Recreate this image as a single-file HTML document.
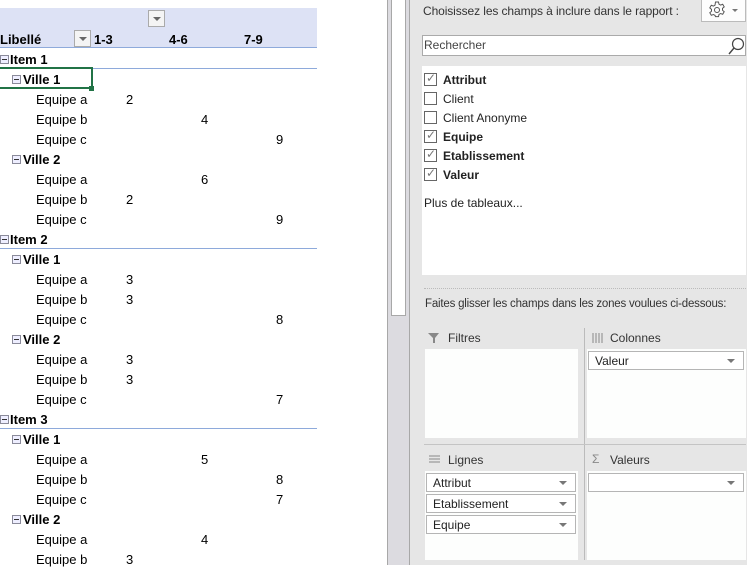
<!DOCTYPE html>
<html><head><meta charset="utf-8"><style>
*{margin:0;padding:0;box-sizing:border-box}
body{width:747px;height:565px;overflow:hidden;background:#fff;font-family:"Liberation Sans",sans-serif;font-size:13px;color:#000;position:relative}
.a{position:absolute;white-space:nowrap}
.r{position:absolute;left:0;width:320px;height:20px;line-height:22px}
.b{font-weight:bold}
.m{position:absolute;width:9px;height:9px;border:1px solid #8a8a9a;background:#eef;top:6px}
.m:after{content:"";position:absolute;left:1px;top:3px;width:5px;height:1px;background:#333}
.hl{position:absolute;left:0;width:317px;height:1px;background:#8eaadb}
.cb{position:absolute;left:424px;width:13px;height:13px;border:1px solid #666;background:#fff}
.ck:after{content:"✓";position:absolute;left:1px;top:-3px;font-size:12px;color:#777}
.fl{position:absolute;left:443px;font-size:12px;color:#222}
.dd{position:absolute;height:19px;border:1px solid #b5b5b5;background:#fff;font-size:12px;line-height:18px;padding-left:6px;color:#222}
.dd:after{content:"";position:absolute;right:8px;top:7px;border-left:4px solid transparent;border-right:4px solid transparent;border-top:4px solid #777}
.zone{position:absolute;background:#fdfefd}
.zt{position:absolute;font-size:12px;color:#333}
</style></head><body>
<div class="a" style="left:0;top:8px;width:317px;height:39px;background:#dde2f5"></div>
<div class="a" style="left:0;top:47px;width:317px;height:1px;background:#8eaadb"></div>
<div class="a" style="left:148px;top:10px;width:17px;height:17px;border:1px solid #aaa;background:#f4f4f4"></div>
<div class="a" style="left:153px;top:17px;border-left:4px solid transparent;border-right:4px solid transparent;border-top:4px solid #666"></div>
<div class="a" style="left:74px;top:30px;width:17px;height:17px;border:1px solid #aaa;background:#f4f4f4"></div>
<div class="a" style="left:79px;top:37px;border-left:4px solid transparent;border-right:4px solid transparent;border-top:4px solid #666"></div>
<div class="a b" style="left:0;top:32px;line-height:16px">Libellé</div>
<div class="a b" style="left:94px;top:32px;line-height:16px">1-3</div>
<div class="a b" style="left:169px;top:32px;line-height:16px">4-6</div>
<div class="a b" style="left:244px;top:32px;line-height:16px">7-9</div>
<div class="hl" style="top:68px"></div><div class="hl" style="top:248px"></div><div class="hl" style="top:428px"></div>
<div class="a" style="left:0;top:67px;width:93px;height:22px;border:2px solid #217346;border-left:none"></div>
<div class="a" style="left:89px;top:86px;width:5px;height:5px;background:#217346"></div>

<div class="r b" style="top:49px"><span class="m" style="left:0"></span><span class="a" style="left:10px">Item 1</span></div>
<div class="r b" style="top:69px"><span class="m" style="left:12px"></span><span class="a" style="left:23px">Ville 1</span></div>
<div class="r" style="top:89px"><span class="a" style="left:36px">Equipe a</span><span class="a" style="left:126px">2</span></div>
<div class="r" style="top:109px"><span class="a" style="left:36px">Equipe b</span><span class="a" style="left:201px">4</span></div>
<div class="r" style="top:129px"><span class="a" style="left:36px">Equipe c</span><span class="a" style="left:276px">9</span></div>
<div class="r b" style="top:149px"><span class="m" style="left:12px"></span><span class="a" style="left:23px">Ville 2</span></div>
<div class="r" style="top:169px"><span class="a" style="left:36px">Equipe a</span><span class="a" style="left:201px">6</span></div>
<div class="r" style="top:189px"><span class="a" style="left:36px">Equipe b</span><span class="a" style="left:126px">2</span></div>
<div class="r" style="top:209px"><span class="a" style="left:36px">Equipe c</span><span class="a" style="left:276px">9</span></div>
<div class="r b" style="top:229px"><span class="m" style="left:0"></span><span class="a" style="left:10px">Item 2</span></div>
<div class="r b" style="top:249px"><span class="m" style="left:12px"></span><span class="a" style="left:23px">Ville 1</span></div>
<div class="r" style="top:269px"><span class="a" style="left:36px">Equipe a</span><span class="a" style="left:126px">3</span></div>
<div class="r" style="top:289px"><span class="a" style="left:36px">Equipe b</span><span class="a" style="left:126px">3</span></div>
<div class="r" style="top:309px"><span class="a" style="left:36px">Equipe c</span><span class="a" style="left:276px">8</span></div>
<div class="r b" style="top:329px"><span class="m" style="left:12px"></span><span class="a" style="left:23px">Ville 2</span></div>
<div class="r" style="top:349px"><span class="a" style="left:36px">Equipe a</span><span class="a" style="left:126px">3</span></div>
<div class="r" style="top:369px"><span class="a" style="left:36px">Equipe b</span><span class="a" style="left:126px">3</span></div>
<div class="r" style="top:389px"><span class="a" style="left:36px">Equipe c</span><span class="a" style="left:276px">7</span></div>
<div class="r b" style="top:409px"><span class="m" style="left:0"></span><span class="a" style="left:10px">Item 3</span></div>
<div class="r b" style="top:429px"><span class="m" style="left:12px"></span><span class="a" style="left:23px">Ville 1</span></div>
<div class="r" style="top:449px"><span class="a" style="left:36px">Equipe a</span><span class="a" style="left:201px">5</span></div>
<div class="r" style="top:469px"><span class="a" style="left:36px">Equipe b</span><span class="a" style="left:276px">8</span></div>
<div class="r" style="top:489px"><span class="a" style="left:36px">Equipe c</span><span class="a" style="left:276px">7</span></div>
<div class="r b" style="top:509px"><span class="m" style="left:12px"></span><span class="a" style="left:23px">Ville 2</span></div>
<div class="r" style="top:529px"><span class="a" style="left:36px">Equipe a</span><span class="a" style="left:201px">4</span></div>
<div class="r" style="top:549px"><span class="a" style="left:36px">Equipe b</span><span class="a" style="left:126px">3</span></div>

<div class="a" style="left:387px;top:0;width:23px;height:565px;background:#dcdbe0;border-left:1px solid #a8a8a8"></div>
<div class="a" style="left:391px;top:0;width:15px;height:316px;background:#fff;border:1px solid #a8a8a8;border-top:none"></div>
<div class="a" style="left:409px;top:0;width:1px;height:565px;background:#a8a8a8"></div>
<div class="a" style="left:410px;top:0;width:337px;height:565px;background:#e6e6e6"></div>
<div class="a" style="left:423px;top:3px;font-size:12px;color:#333;line-height:16px;letter-spacing:-0.1px">Choisissez les champs à inclure dans le rapport :</div>
<div class="a" style="left:701px;top:-1px;width:45px;height:23px;border:1px solid #bbb;background:#fdfdfd"></div>
<svg class="a" style="left:708px;top:1px" width="18" height="18" viewBox="0 0 18 18"><path d="M7.5 1h3l.5 2.2 1.6.9 2.1-.8 1.5 2.6-1.7 1.5v1.8l1.7 1.5-1.5 2.6-2.1-.8-1.6.9-.5 2.2h-3L7 14.4l-1.6-.9-2.1.8-1.5-2.6 1.7-1.5V8.4L1.8 6.9 3.3 4.3l2.1.8L7 4.2z" fill="none" stroke="#555" stroke-width="1"/><circle cx="9" cy="9" r="2.5" fill="none" stroke="#555"/></svg>
<div class="a" style="left:732px;top:9px;border-left:3px solid transparent;border-right:3px solid transparent;border-top:3px solid #777"></div>
<div class="a" style="left:422px;top:35px;width:324px;height:21px;border:1px solid #aaa;background:#fff;font-size:12px;color:#444;line-height:19px;padding-left:1px">Rechercher</div>
<svg class="a" style="left:726px;top:36px" width="20" height="20"><circle cx="12" cy="8" r="5.5" fill="none" stroke="#444" stroke-width="1.2"/><line x1="8" y1="12" x2="3" y2="18" stroke="#444" stroke-width="1.4"/></svg>
<div class="a" style="left:422px;top:66px;width:324px;height:209px;background:#fff"></div>
<div class="cb ck" style="top:73px"></div><div class="fl b" style="top:73px">Attribut</div>
<div class="cb" style="top:92px"></div><div class="fl" style="top:92px">Client</div>
<div class="cb" style="top:111px"></div><div class="fl" style="top:111px">Client Anonyme</div>
<div class="cb ck" style="top:130px"></div><div class="fl b" style="top:130px">Equipe</div>
<div class="cb ck" style="top:149px"></div><div class="fl b" style="top:149px">Etablissement</div>
<div class="cb ck" style="top:168px"></div><div class="fl b" style="top:168px">Valeur</div>
<div class="fl" style="left:424px;top:196px">Plus de tableaux...</div>
<div class="a" style="left:424px;top:288px;width:322px;border-top:1px dotted #bbb"></div>
<div class="a" style="left:425px;top:298px;font-size:11.5px;color:#333;letter-spacing:-0.2px">Faites glisser les champs dans les zones voulues ci-dessous:</div>
<div class="a" style="left:584px;top:328px;width:1px;height:232px;background:#bbb"></div>
<div class="a" style="left:424px;top:444px;width:322px;height:1px;background:#c4c4c4"></div>
<svg class="a" style="left:428px;top:332px" width="12" height="12"><path d="M0 1H11L7 6V11H5V6Z" fill="#888"/></svg>
<div class="zt" style="left:448px;top:331px">Filtres</div>
<svg class="a" style="left:592px;top:333px" width="12" height="10"><path d="M1 0v10M4 0v10M7 0v10M10 0v10" stroke="#888" stroke-width="1"/></svg>
<div class="zt" style="left:610px;top:331px">Colonnes</div>
<svg class="a" style="left:429px;top:455px" width="12" height="10"><path d="M0 1h11M0 4h11M0 7h11" stroke="#888"/></svg>
<div class="zt" style="left:448px;top:453px">Lignes</div>
<div class="zt" style="left:592px;top:452px;color:#888">Σ</div>
<div class="zt" style="left:610px;top:453px">Valeurs</div>
<div class="zone" style="left:425px;top:349px;width:153px;height:89px"></div>
<div class="zone" style="left:587px;top:349px;width:159px;height:89px"></div>
<div class="zone" style="left:425px;top:471px;width:153px;height:89px"></div>
<div class="zone" style="left:587px;top:471px;width:159px;height:89px"></div>
<div class="dd" style="left:588px;top:351px;width:156px">Valeur</div>
<div class="dd" style="left:426px;top:473px;width:150px">Attribut</div>
<div class="dd" style="left:426px;top:494px;width:150px">Etablissement</div>
<div class="dd" style="left:426px;top:515px;width:150px">Equipe</div>
<div class="dd" style="left:588px;top:473px;width:156px"></div>
</body></html>
